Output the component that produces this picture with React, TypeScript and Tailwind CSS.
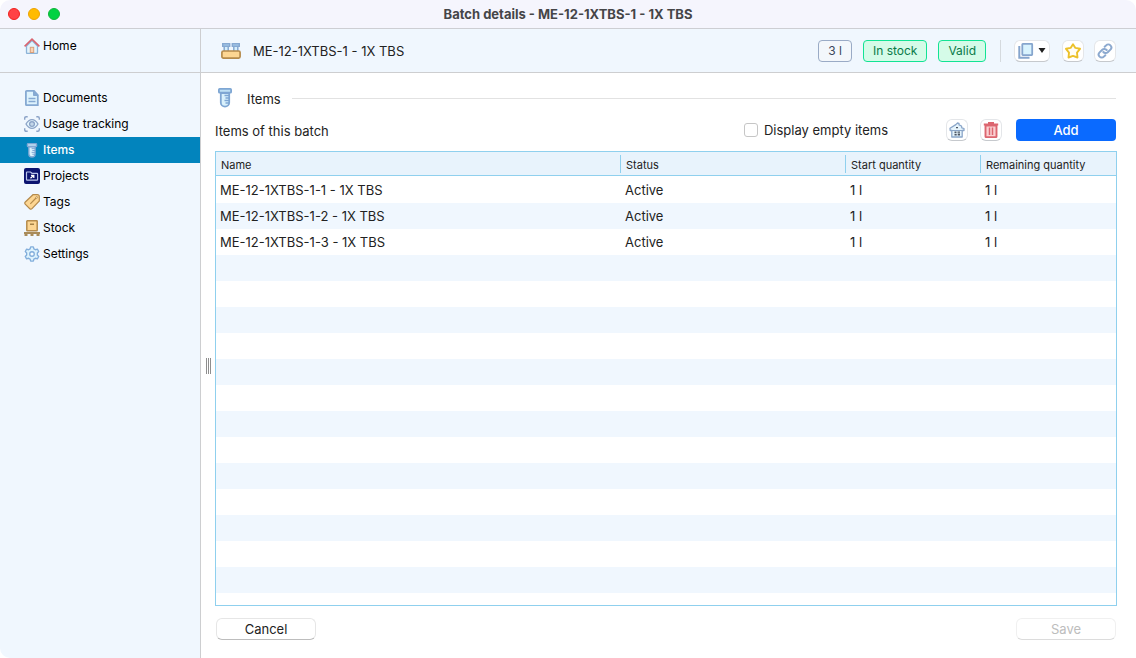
import { ReactNode, useState } from 'react';
import clsx from 'clsx';

function HomeIcon() {
    return (
        <svg viewBox="0 0 16 16" className="w-4 h-4 shrink-0" fill="none">
            <path d="M2.5 8v6.5q0 1 1 1h9q1 0 1-1V8L8 2.5z" fill="#e3f4fd" stroke="#8db4d8" strokeWidth="1.3" />
            <rect x="6.3" y="9.3" width="3.4" height="5.2" fill="#fbd3b4" stroke="#d9a07a" />
            <path d="M.6 8.4 8 1.2l7.4 7.2" stroke="#d9646f" strokeWidth="1.6" />
        </svg>
    )
}

function DocumentIcon() {
    return (
        <svg viewBox="0 0 16 16" className="w-4 h-4 shrink-0" fill="none">
            <path d="M2.8.9H10L13.800 5v10.100H2.500q-.6 0-.6-.6V1.700q0-.8.9-.8z" fill="#def3fd" stroke="#86a9d2" strokeWidth="1.800" />
            <path d="M9.500.9V5.500H14z" fill="#86a9d2" stroke="#86a9d2" />
            <path d="M4.500 8.500h7M4.500 11.500h7" stroke="#86a9d2" strokeWidth="1.500" />
        </svg>
    )
}

function TrackingIcon() {
    return (
        <svg viewBox="0 0 16 16" className="w-4 h-4 shrink-0" fill="none" stroke="#8ba3c7">
            <path d="M.7 3.700V2.200Q.7.7 2.200.7h1.500M12.300.7h1.500q1.500 0 1.500 1.500v1.500M15.300 12.300v1.500q0 1.500-1.500 1.500h-1.500M3.700 15.300H2.200Q.7 15.300.7 13.800v-1.500" strokeWidth="1.400" />
            <path d="M2 8Q4.500 3.600 8 3.600T14 8Q11.500 12.400 8 12.400T2 8z" fill="#e3f4fd" strokeWidth="1.300" />
            <circle cx="8" cy="8" r="2.300" strokeWidth="1.500" />
            <circle cx="8" cy="8" r=".7" fill="#8ba3c7" stroke="none" />
        </svg>
    )
}

function TubeIcon({ className }: { className: string }) {
    return (
        <svg viewBox="0 0 14 20" className={className} fill="none" stroke="#7ea6d3">
            <path d="M2.800 5v9.500a4.200 4.200 0 0 0 8.400 0V5z" fill="#d9f1fc" strokeWidth="1.800" />
            <rect x=".9" y=".9" width="12.200" height="3.800" rx=".8" fill="#bfe0f5" strokeWidth="1.800" />
            <path d="M6.500 7.500H11M7.500 10H11M6.500 12.500H11M7.500 15H11" strokeWidth="1.300" />
        </svg>
    )
}

function ProjectIcon() {
    return (
        <svg viewBox="0 0 16 16" className="w-4 h-4 shrink-0" fill="none">
            <rect width="16" height="16" rx="2" fill="#0c1470" />
            <path d="M3 4h3.500L8 5.300h5q.6 0 .6.6v5.600q0 .7-.7.7H3.200q-.7 0-.7-.7V4.600q0-.6.5-.6z" stroke="#b9c3ea" strokeWidth="1.200" />
            <path d="M6.500 10.300 9.500 7.500M7 7.300h2.800V10" stroke="#fff" strokeWidth="1.300" />
        </svg>
    )
}

function TagIcon() {
    return (
        <svg viewBox="0 0 16 16" className="w-4 h-4 shrink-0" fill="none" stroke="#b58b4c">
            <path d="M9 .7h4.300q2 0 2 2V7L8 14.600Q7 15.700 5.800 14.700L1.200 10.200Q.3 9 1.300 8z" fill="#fdd692" strokeWidth="1.200" />
            <path d="M12.500 3.500 6.300 9.800" strokeWidth="1.200" />
            <circle cx="12.700" cy="3.400" r=".9" fill="#fff3dc" strokeWidth=".8" />
        </svg>
    )
}

function StockIcon() {
    return (
        <svg viewBox="0 0 16 16" className="w-4 h-4 shrink-0" fill="none">
            <rect x="2.800" y=".8" width="10.400" height="10" rx=".5" fill="#fdd692" stroke="#b58b4c" strokeWidth="1.500" />
            <path d="M6 4.200h4" stroke="#a58248" strokeWidth="1.400" />
            <path d="M0 12h16v2H0zM.5 13.500h3V16h-3zM6.500 13.500h3V16h-3zM12.500 13.500h3V16h-3z" fill="#a88b5a" />
        </svg>
    )
}

function SettingsIcon() {
    return (
        <svg viewBox="0 0 24 24" className="w-4 h-4 shrink-0" fill="#def3fd" stroke="#82aedb" strokeWidth="2">
            <path d="M9.200 4.200 10 1.300h4l.8 2.900 2.400 1.400 2.900-.8 2 3.400-2.100 2.200v3.200l2.100 2.200-2 3.400-2.900-.8-2.400 1.400-.8 2.900h-4l-.8-2.900-2.400-1.400-2.900.8-2-3.400L4 13.600v-3.200L1.900 8.200l2-3.400 2.900.8z" strokeLinejoin="round" />
            <circle cx="12" cy="12" r="3.400" fill="#f7fcff" />
        </svg>
    )
}

function RackIcon() {
    return (
        <svg viewBox="0 0 20 16" className="w-5 h-4 shrink-0" fill="none">
            <path d="M3.200 3h4v6h-4zM12.800 3h4v6h-4z" fill="#d6effc" stroke="#86a9d2" strokeWidth="1.500" />
            <path d="M1.700.8h7v2.400h-7zM11.300.8h7v2.400h-7z" fill="#a9cdec" stroke="#86a9d2" strokeWidth="1.400" />
            <rect x=".9" y="8" width="18.200" height="7.100" rx="1.500" fill="#fdd692" stroke="#b58b4c" strokeWidth="1.700" />
        </svg>
    )
}

function CopyIcon() {
    return (
        <svg viewBox="0 0 16 16" className="w-4 h-4 shrink-0" fill="none">
            <path d="M1.300 3v11.800H11.500" stroke="#86a5cd" strokeWidth="2" />
            <rect x="4.300" y=".9" width="9.900" height="11.200" rx=".5" fill="#d9f3fe" stroke="#86a5cd" strokeWidth="1.800" />
        </svg>
    )
}

function StarIcon() {
    return (
        <svg viewBox="0 0 16 16" className="w-4 h-4 shrink-0" fill="#fffdf5">
            <path d="m8 1.200 2.400 3.700 4.600.900-3 3.800.500 4.900L8 12.900l-4.500 1.600.5-4.900-3-3.800 4.600-.9z" stroke="#ecc12a" strokeWidth="1.900" strokeLinejoin="round" />
        </svg>
    )
}

function LinkIcon() {
    return (
        <svg viewBox="0 0 24 24" className="w-4 h-4 shrink-0" fill="none" stroke="#8ca9cf" strokeWidth="3" strokeLinecap="round">
            <path d="M9.500 13.500a4.500 4.500 0 0 0 6.600.400l4-4a4.500 4.500 0 0 0-6.400-6.400l-2.200 2.200" />
            <path d="M14.500 10.500a4.500 4.500 0 0 0-6.600-.400l-4 4a4.500 4.500 0 0 0 6.400 6.400l2.200-2.200" />
        </svg>
    )
}

function StorageIcon() {
    return (
        <svg viewBox="0 0 16 16" className="w-4 h-4 shrink-0" fill="none">
            <path d="M2.800 8.500H1.200L1 6.300 6.800 2.600 8.500 1l1.500.3v1.500L12.500 4l.3 1.800 2.200.7v2h-1.800V15H2.800z" fill="#e6f4fc" stroke="#8ba6c9" strokeWidth="1.300" strokeLinejoin="round" />
            <path d="M3 8.500h10" stroke="#8ba6c9" />
            <path d="M7 5h2v1.200H7zM5.500 9.500h2v1.800h-2zM8.500 9.500H11v1.200H8.500zM5.500 12h2.200v1.500H5.500zM8.700 11.500H11v2H8.700z" fill="#4b5563" />
        </svg>
    )
}

function TrashIcon() {
    return (
        <svg viewBox="0 0 16 16" className="w-4 h-4 shrink-0" fill="none" stroke="#dc6670">
            <path d="M2.500 3.500v11q0 .6.6.6h9.800q.6 0 .6-.6v-11z" fill="#fbd0d2" strokeWidth="1.900" />
            <path d="M.8 2.500h14.400M5 1h6" strokeWidth="2" />
            <path d="M6.500 5.500v7.500M9.500 5.500v7.500" strokeWidth="1.500" />
        </svg>
    )
}

const menu = [
    { name: 'Documents', icon: <DocumentIcon /> },
    { name: 'Usage tracking', icon: <TrackingIcon /> },
    { name: 'Items', icon: <TubeIcon className="w-4 h-[15px] shrink-0" /> },
    { name: 'Projects', icon: <ProjectIcon /> },
    { name: 'Tags', icon: <TagIcon /> },
    { name: 'Stock', icon: <StockIcon /> },
    { name: 'Settings', icon: <SettingsIcon /> },
]

const items = [
    { name: 'ME-12-1XTBS-1-1 - 1X TBS', status: 'Active', start: '1 l', remaining: '1 l' },
    { name: 'ME-12-1XTBS-1-2 - 1X TBS', status: 'Active', start: '1 l', remaining: '1 l' },
    { name: 'ME-12-1XTBS-1-3 - 1X TBS', status: 'Active', start: '1 l', remaining: '1 l' },
]

// blank striped rows that fill the table, the overflow is clipped
const emptyRows = Array.from({ length: 60 }, (_, i) => i)

const columns = ['Name', 'Status', 'Start quantity', 'Remaining quantity']

function IconButton({ label, className, children }: { label: string, className?: string, children: ReactNode }) {
    return (
        <button
            aria-label={label}
            className={clsx('h-[22px] flex items-center justify-center rounded-md bg-white border border-[#e4e6e9] border-b-[#c6c9cd]', className ?? 'w-[22px]')}
        >
            {children}
        </button>
    )
}

export default function App() {
    const [active, setActive] = useState('Items')
    const [showEmpty, setShowEmpty] = useState(false)

    return (
        <div className="h-screen flex flex-col overflow-hidden rounded-[10px] bg-white font-[Inter,sans-serif] text-[13px] leading-4 text-[#222]">
            <div className="h-[29px] shrink-0 grid grid-cols-[1fr_auto_1fr] items-center bg-[#f5f5fd] border-b border-[#cdced3]">
                <div className="flex gap-2 pl-2">
                    <button aria-label="Close" className="w-3 h-3 rounded-full bg-[#ff4245] border border-[#f0211f]" />
                    <button aria-label="Minimize" className="w-3 h-3 rounded-full bg-[#ffbb00] border border-[#eea300]" />
                    <button aria-label="Zoom" className="w-3 h-3 rounded-full bg-[#00d241] border border-[#10b53a]" />
                </div>
                <h1 className="font-bold text-[#454548]">Batch details - ME-12-1XTBS-1 - 1X TBS</h1>
            </div>

            <div className="flex-1 min-h-0 flex">
                <nav className="w-[201px] shrink-0 bg-[#f0f7fe] border-r border-[#cdced0] text-xs text-black">
                    <div className="h-11 pt-1 border-b border-[#cdced0]">
                        <a href="#home" className="h-[26px] pl-6 flex items-center gap-[3px]">
                            <HomeIcon />
                            Home
                        </a>
                    </div>
                    <div className="pt-3">
                        {menu.map((item) => (
                            <a
                                key={item.name}
                                href={'#' + item.name}
                                onClick={() => setActive(item.name)}
                                className={clsx('h-[26px] pl-6 flex items-center gap-[3px]', active === item.name && 'bg-[#0284bd] text-white font-medium')}
                            >
                                {item.icon}
                                {item.name}
                            </a>
                        ))}
                    </div>
                </nav>

                <div className="flex-1 min-w-0 flex flex-col">
                    <header className="h-11 shrink-0 px-5 flex items-center bg-[#f0f7fe] border-b border-[#cdced0]">
                        <RackIcon />
                        <h2 className="flex-1 pl-3">ME-12-1XTBS-1 - 1X TBS</h2>
                        <div className="flex items-center gap-[11px] text-xs">
                            <span className="h-[22px] px-[9px] flex items-center rounded border border-[#9aabc6] bg-[#f3f7fb] text-[#3b475a]">3 l</span>
                            <span className="h-[22px] px-[9px] flex items-center rounded border border-[#12e394] bg-[#d5fbe8] text-[#0a7a48]">In stock</span>
                            <span className="h-[22px] px-[9px] flex items-center rounded border border-[#12e394] bg-[#d5fbe8] text-[#0a7a48]">Valid</span>
                        </div>
                        <span className="w-px h-[22px] ml-[14px] mr-[13px] bg-[#d5dade]" />
                        <div className="flex items-center gap-3">
                            <IconButton label="Copy" className="w-9 gap-1">
                                <CopyIcon />
                                <svg viewBox="0 0 8 5" className="w-2 h-[5px]"><path d="M.5 0h7L4 5z" fill="#1f1f1f" /></svg>
                            </IconButton>
                            <div className="flex gap-2.5">
                                <IconButton label="Favorite"><StarIcon /></IconButton>
                                <IconButton label="Copy link"><LinkIcon /></IconButton>
                            </div>
                        </div>
                    </header>

                    <div className="flex-1 min-h-0 flex">
                        <div className="w-[14px] shrink-0 flex items-center justify-center gap-px">
                            <span className="w-px h-4 bg-[#8e8e8e]" />
                            <span className="w-px h-4 bg-[#8e8e8e]" />
                            <span className="w-px h-4 bg-[#8e8e8e]" />
                        </div>
                        <main className="flex-1 min-w-0 pr-[19px] pb-[18px] flex flex-col">
                            <div className="h-[46px] shrink-0 pt-1 pr-px flex items-center">
                                <TubeIcon className="w-5 h-5 shrink-0" />
                                <h3 className="pl-3 pr-[11px] pt-0.5">Items</h3>
                                <hr className="flex-1 border-[#e2e2e2]" />
                            </div>
                            <div className="h-8 shrink-0 pr-px flex items-start">
                                <h4 className="flex-1 pt-1">Items of this batch</h4>
                                <label className="h-[22px] mr-[58px] flex items-center gap-1.5">
                                    <input
                                        type="checkbox"
                                        checked={showEmpty}
                                        onChange={(e) => setShowEmpty(e.target.checked)}
                                        className="appearance-none w-[14px] h-[14px] rounded-[3px] border border-[#c6c6c6] bg-white checked:bg-[#0a6aff]"
                                    />
                                    Display empty items
                                </label>
                                <div className="flex gap-3">
                                    <IconButton label="Move to storage"><StorageIcon /></IconButton>
                                    <IconButton label="Delete"><TrashIcon /></IconButton>
                                </div>
                                <button className="w-[100px] h-[22px] ml-[14px] rounded bg-[#0a6aff] text-white font-medium">Add</button>
                            </div>

                            <div className="flex-1 min-h-0 overflow-hidden border border-[#8fd0ee]">
                                <table className="w-full table-fixed text-left border-separate border-spacing-0">
                                    <colgroup>
                                        <col />
                                        <col className="w-[225px]" />
                                        <col className="w-[135px]" />
                                        <col className="w-[136px]" />
                                    </colgroup>
                                    <thead className="text-[11px]">
                                        <tr className="h-6 bg-[#e8f3fc]">
                                            {columns.map((column, i) => (
                                                <th key={column} className="p-0 border-b border-[#8fd0ee] font-normal">
                                                    <div className={clsx('h-[18px] pt-0.5 pl-[5px]', i > 0 && 'border-l border-[#8fd0ee]')}>{column}</div>
                                                </th>
                                            ))}
                                        </tr>
                                    </thead>
                                    <tbody>
                                        {items.map((item) => (
                                            <tr key={item.name} className="group h-[26px] first:h-[27px] even:bg-[#f0f7fe]">
                                                <td className="p-0 pl-1 group-first:pt-px">{item.name}</td>
                                                <td className="p-0 pl-[5px] group-first:pt-px">{item.status}</td>
                                                <td className="p-0 pl-[5px] group-first:pt-px">{item.start}</td>
                                                <td className="p-0 pl-[5px] group-first:pt-px">{item.remaining}</td>
                                            </tr>
                                        ))}
                                        {emptyRows.map((row) => (
                                            <tr key={row} className="h-[26px] even:bg-[#f0f7fe]">
                                                <td colSpan={4} className="p-0" />
                                            </tr>
                                        ))}
                                    </tbody>
                                </table>
                            </div>

                            <div className="shrink-0 pt-3 px-px flex justify-between">
                                <button className="w-[100px] h-[22px] rounded-md border border-[#e6e6e6] border-b-[#bdbdbd] bg-white">Cancel</button>
                                <button disabled className="w-[100px] h-[22px] rounded-md border border-[#f0f0f0] border-b-[#dcdcdc] bg-white text-[#bdbdbd]">Save</button>
                            </div>
                        </main>
                    </div>
                </div>
            </div>
        </div>
    )
}
